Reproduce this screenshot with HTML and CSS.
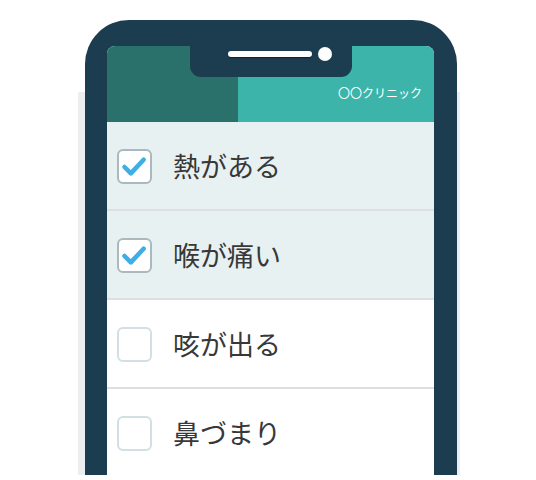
FILE: index.html
```html
<!DOCTYPE html>
<html lang="ja">
  <head>
    <meta charset="UTF-8" />
    <meta name="viewport" content="width=device-width, initial-scale=1.0" />
    <title>症状チェック</title>
    <link rel="stylesheet" href="styles.css">
  </head>

  <body>
    <div class="stage">
      <div class="backdrop"></div>

      <div class="phone">
        <div class="notch">
          <span class="speaker"></span>
          <span class="camera"></span>
        </div>

        <div class="screen">
          <div class="header">
            <div class="header-left"></div>
            <div class="header-right">〇〇クリニック</div>
          </div>

          <div class="list">
            <label class="row checked">
              <span class="box">
                <svg viewBox="0 0 34 34" width="34" height="34">
                  <path d="M6 17 L13 24 L27 9" />
                </svg>
              </span>
              熱がある
            </label>
            <label class="row checked">
              <span class="box">
                <svg viewBox="0 0 34 34" width="34" height="34">
                  <path d="M6 17 L13 24 L27 9" />
                </svg>
              </span>
              喉が痛い
            </label>
            <label class="row">
              <span class="box"></span>
              咳が出る
            </label>
            <label class="row">
              <span class="box"></span>
              鼻づまり
            </label>
          </div>
        </div>
      </div>
    </div>
  </body>
</html>
```

FILE: styles.css
```css
body {
  margin: 0;
  padding: 0;
  background-color: #ffffff;
  font-family: "Noto Sans CJK JP", "Noto Sans", sans-serif;
}

.stage {
  position: relative;
  width: 536px;
  height: 480px;
  padding: 20px 0 0 85px;
  box-sizing: border-box;
  overflow: hidden;
}

/* page sitting behind the phone */
.backdrop {
  position: absolute;
  left: 78px;
  top: 92px;
  width: 382px;
  height: 383px;
  background-color: #eceef0;
}

.phone {
  position: relative;
  width: 372px;
  height: 455px;
  padding: 26px 23px 0 22px;
  box-sizing: border-box;
  background-color: #1c3c50;
  border-radius: 44px 44px 0 0;
}

.notch {
  position: absolute;
  top: 26px;
  left: 105px;
  width: 162px;
  height: 31px;
  background-color: #1c3c50;
  border-radius: 0 0 11px 11px;
  display: flex;
  align-items: center;
  justify-content: flex-end;
  gap: 6px;
  padding: 0 20px 16px 0;
  box-sizing: border-box;
  z-index: 2;
}

.speaker {
  width: 84px;
  height: 6px;
  background-color: #ffffff;
  border-radius: 3px;
  box-shadow: 0 1px 1px rgba(0, 0, 0, 0.4);
}

.camera {
  width: 14px;
  height: 14px;
  background-color: #ffffff;
  border-radius: 50%;
}

.screen {
  height: 100%;
  background-color: #ffffff;
  border-radius: 8px 8px 0 0;
  overflow: hidden;
}

.header {
  display: flex;
  height: 76px;
}

.header-left {
  width: 131px;
  background-color: #2a716b;
}

.header-right {
  flex: 1;
  background-color: #3db4aa;
  color: #ffffff;
  font-size: 12px;
  line-height: 16px;
  text-align: right;
  padding: 39px 12px 0 0;
  box-sizing: border-box;
}

.row {
  display: flex;
  align-items: center;
  gap: 21px;
  height: 89px;
  padding: 0 0 0 10px;
  box-sizing: border-box;
  border-bottom: 2px solid #dedfdf;
  font-size: 27px;
  color: #383838;
  cursor: pointer;
}

.row.checked {
  background-color: #e7f1f2;
}

.box {
  width: 35px;
  height: 35px;
  box-sizing: border-box;
  border: 2px solid #d2e0e4;
  border-radius: 6px;
  background-color: #ffffff;
  display: flex;
  align-items: center;
  justify-content: center;
  margin-top: 2px;
}

.row.checked .box {
  border-color: #a9b9be;
}

.box svg {
  fill: none;
  stroke: #3faee6;
  stroke-width: 5;
  stroke-linecap: round;
  stroke-linejoin: round;
}
```
